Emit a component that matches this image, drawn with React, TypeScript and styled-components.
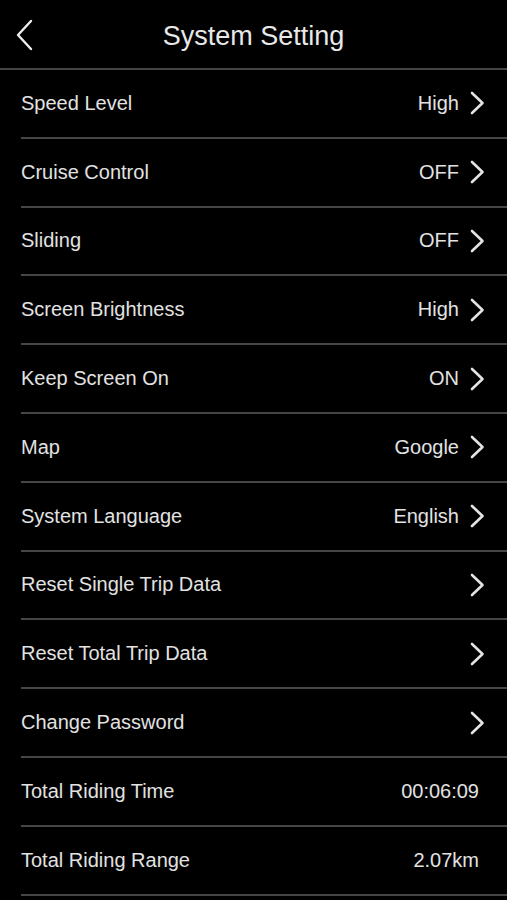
import { FC } from "react";
import styled, { createGlobalStyle } from "styled-components";

const GlobalStyle = createGlobalStyle`
  html, body {
    margin: 0;
    padding: 0;
    background: #000;
  }
  body {
    font-family: "Liberation Sans", Arial, Helvetica, sans-serif;
    -webkit-font-smoothing: antialiased;
  }
`;

type Item = { label: string; value?: string; link?: boolean };

const items: Item[] = [
  { label: "Speed Level", value: "High", link: true },
  { label: "Cruise Control", value: "OFF", link: true },
  { label: "Sliding", value: "OFF", link: true },
  { label: "Screen Brightness", value: "High", link: true },
  { label: "Keep Screen On", value: "ON", link: true },
  { label: "Map", value: "Google", link: true },
  { label: "System Language", value: "English", link: true },
  { label: "Reset Single Trip Data", link: true },
  { label: "Reset Total Trip Data", link: true },
  { label: "Change Password", link: true },
  { label: "Total Riding Time", value: "00:06:09" },
  { label: "Total Riding Range", value: "2.07km" },
];

const ChevronRight: FC = () => (
  <svg width="16" height="24" viewBox="0 0 16 24" fill="none">
    <path d="M3 2 L13.5 12 L3 22" stroke="#e4e4e4" strokeWidth="2.6" strokeLinecap="round" strokeLinejoin="round" />
  </svg>
);

const ChevronLeft: FC = () => (
  <svg width="20" height="32" viewBox="0 0 20 32" fill="none">
    <path d="M17 2 L4 16 L17 30" stroke="#ececec" strokeWidth="2.4" strokeLinecap="round" strokeLinejoin="round" />
  </svg>
);

export default function App() {
  return (
    <>
      <GlobalStyle />
      <Screen>
        <Header>
          <Back type="button" aria-label="back">
            <ChevronLeft />
          </Back>
          <Title>System Setting</Title>
        </Header>
        <List>
          {items.map((it) => (
            <Row key={it.label}>
              <Label>{it.label}</Label>
              <Right $link={!!it.link}>
                {it.value && <Value>{it.value}</Value>}
                {it.link && <ChevronRight />}
              </Right>
            </Row>
          ))}
        </List>
      </Screen>
    </>
  );
}

const Screen = styled.div`
  width: 507px;
  height: 900px;
  background: #000;
  overflow: hidden;
`;

const Header = styled.header`
  position: relative;
  height: 70px;
  box-sizing: border-box;
  padding-top: 4px;
  display: flex;
  align-items: center;
  justify-content: center;
  border-bottom: 2px solid #464646;
`;

const Back = styled.button`
  position: absolute;
  left: 14px;
  top: 19px;
  padding: 0;
  border: 0;
  background: none;
  display: flex;
`;

const Title = styled.h1`
  margin: 0;
  font-size: 27px;
  font-weight: 400;
  color: #e8e8e8;
`;

const List = styled.ul`
  list-style: none;
  margin: 0;
  padding: 0 0 0 21px;
`;

const Row = styled.li`
  height: 66.8px;
  display: flex;
  align-items: center;
  justify-content: space-between;
  border-bottom: 2px solid #464646;
`;

const Label = styled.span`
  font-size: 20px;
  color: #e2e2e2;
`;

const Right = styled.div<{ $link: boolean }>`
  display: flex;
  align-items: center;
  gap: 10px;
  padding-right: ${(p) => (p.$link ? "22px" : "28px")};
`;

const Value = styled.span`
  font-size: 20px;
  color: #e2e2e2;
`;
